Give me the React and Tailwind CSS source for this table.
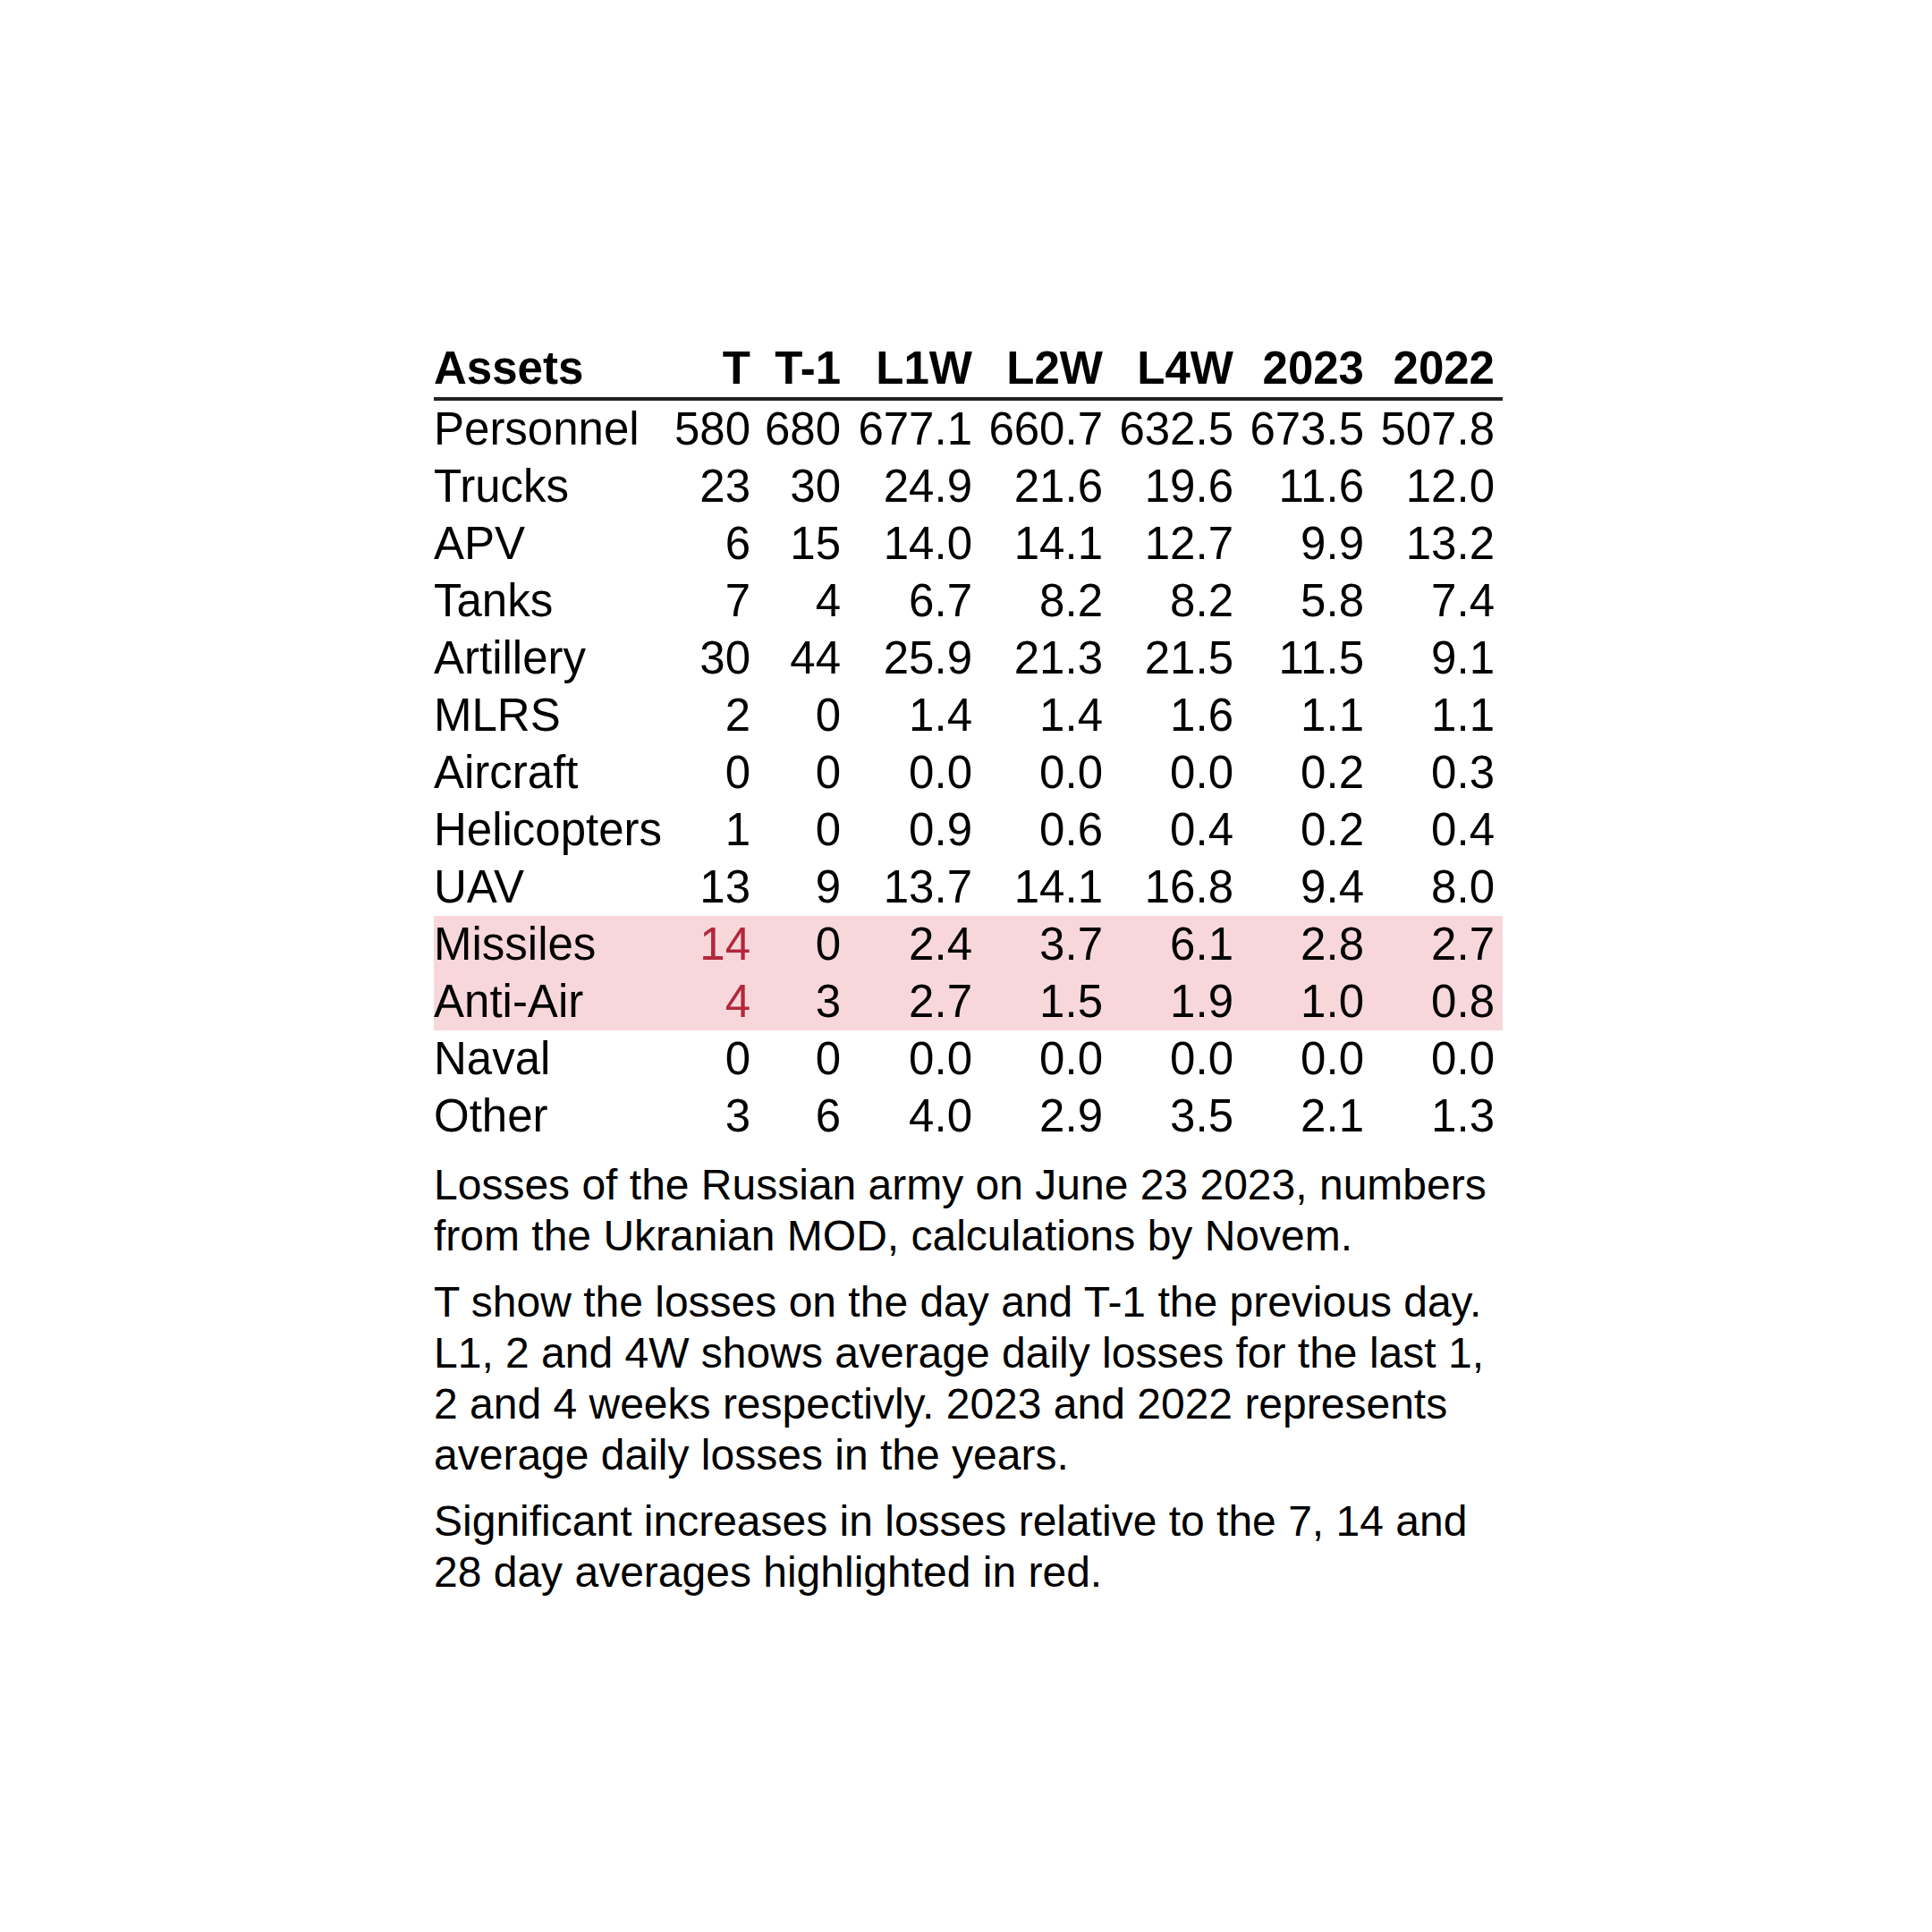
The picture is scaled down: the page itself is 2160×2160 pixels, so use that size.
import React from 'react';

const COLUMNS = ['T', 'T-1', 'L1W', 'L2W', 'L4W', '2023', '2022'];

const ROWS = [
  { label: 'Personnel', values: ['580', '680', '677.1', '660.7', '632.5', '673.5', '507.8'] },
  { label: 'Trucks', values: ['23', '30', '24.9', '21.6', '19.6', '11.6', '12.0'] },
  { label: 'APV', values: ['6', '15', '14.0', '14.1', '12.7', '9.9', '13.2'] },
  { label: 'Tanks', values: ['7', '4', '6.7', '8.2', '8.2', '5.8', '7.4'] },
  { label: 'Artillery', values: ['30', '44', '25.9', '21.3', '21.5', '11.5', '9.1'] },
  { label: 'MLRS', values: ['2', '0', '1.4', '1.4', '1.6', '1.1', '1.1'] },
  { label: 'Aircraft', values: ['0', '0', '0.0', '0.0', '0.0', '0.2', '0.3'] },
  { label: 'Helicopters', values: ['1', '0', '0.9', '0.6', '0.4', '0.2', '0.4'] },
  { label: 'UAV', values: ['13', '9', '13.7', '14.1', '16.8', '9.4', '8.0'] },
  { label: 'Missiles', values: ['14', '0', '2.4', '3.7', '6.1', '2.8', '2.7'], highlight: true },
  { label: 'Anti-Air', values: ['4', '3', '2.7', '1.5', '1.9', '1.0', '0.8'], highlight: true },
  { label: 'Naval', values: ['0', '0', '0.0', '0.0', '0.0', '0.0', '0.0'] },
  { label: 'Other', values: ['3', '6', '4.0', '2.9', '3.5', '2.1', '1.3'] },
];

const NOTES = [
  'Losses of the Russian army on June 23 2023, numbers from the Ukranian MOD, calculations by Novem.',
  'T show the losses on the day and T-1 the previous day. L1, 2 and 4W shows average daily losses for the last 1, 2 and 4 weeks respectivly. 2023 and 2022 represents average daily losses in the years.',
  'Significant increases in losses relative to the 7, 14 and 28 day averages highlighted in red.',
];

const GRID = 'grid grid-cols-[260px_94px_101px_147px_146px_146px_146px_146px] pr-[9px]';

const App = () => {
  return (
    <div className="flex min-h-screen items-center justify-center bg-white pt-[6px] pl-[5px] font-['Liberation_Sans',Arial,sans-serif] text-black">
      <div className="w-[1195px]">
        <div className={`${GRID} border-b-4 border-[#222] text-[51px] font-bold leading-[64px]`}>
          <div className="text-left">Assets</div>
          {COLUMNS.map((col) => (
            <div key={col} className="text-right">
              {col}
            </div>
          ))}
        </div>
        {ROWS.map((row) => (
          <div
            key={row.label}
            className={`${GRID} text-[51px] leading-[64px] ${row.highlight ? 'bg-[#f8d7da]' : ''}`}
          >
            <div className="whitespace-nowrap text-left">{row.label}</div>
            {row.values.map((value, index) => (
              <div
                key={index}
                className={`whitespace-nowrap text-right ${
                  row.highlight && index === 0 ? 'text-[#b2283a]' : ''
                }`}
              >
                {value}
              </div>
            ))}
          </div>
        ))}
        <div className="mt-[16px] space-y-[17px] text-[48px] leading-[57px]">
          {NOTES.map((note) => (
            <p key={note}>{note}</p>
          ))}
        </div>
      </div>
    </div>
  );
};

export default App;
